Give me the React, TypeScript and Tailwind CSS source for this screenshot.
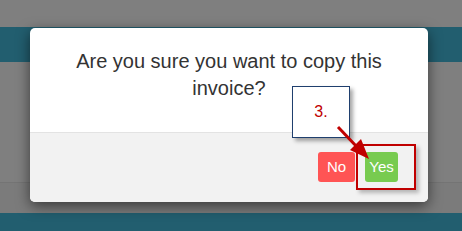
import React from "react";

function Backdrop() {
    return (
        <div className="flex flex-col w-[462px] h-[231px] bg-[#7f7f7f]">
            <div className="h-[27px] bg-[#7f7f7f]" />
            <div className="h-[35px] bg-[#225e6f]" />
            <div className="h-[121px] bg-[#7f7f7f] border-b border-[#747474]" />
            <div className="h-[30px] bg-[#7b7b7b]" />
            <div className="flex-1 bg-[#225e6f]" />
        </div>
    );
}

export default function App() {
    return (
        <div className="relative w-[462px] h-[231px] overflow-hidden font-['Liberation_Sans',Arial,sans-serif]">
            <Backdrop />

            {/* confirm dialog */}
            <div className="absolute left-[30px] top-[28px] w-[398px] h-[174px] flex flex-col rounded-[5px] overflow-hidden bg-white shadow-[0_4px_14px_rgba(0,0,0,0.55)]">
                <div className="h-[104px] pt-[20px] px-[40px] text-center text-[20px] leading-[27px] text-[#333]">
                    Are you sure you want to copy this invoice?
                </div>
                <div className="flex-1 flex justify-end items-start gap-[10px] pt-[19px] pr-[30px] bg-[#f2f2f2] border-t border-[#e3e3e3]">
                    <button className="w-[37px] h-[30px] rounded-[3px] bg-[#ff5454] text-white text-[15px]">No</button>
                    <button className="w-[33px] h-[30px] rounded-[3px] bg-[#78cb50] text-white text-[15px]">Yes</button>
                </div>
            </div>

            {/* annotation: highlight box */}
            <div className="absolute left-[356px] top-[144px] w-[60px] h-[46px] border-2 border-[#c00000] shadow-[3px_3px_4px_rgba(0,0,0,0.25)]" />

            {/* annotation: callout */}
            <div className="absolute left-[292px] top-[86px] w-[58px] h-[52px] flex items-center justify-center bg-white border border-[#1f3f6e] shadow-[3px_3px_4px_rgba(0,0,0,0.35)]">
                <span className="text-[16px] text-[#c00000]">3.</span>
            </div>

            {/* annotation: arrow */}
            <svg className="absolute left-0 top-0" width="462" height="231" viewBox="0 0 462 231">
                <line x1="338" y1="127" x2="358" y2="148" stroke="#c00000" strokeWidth="3" />
                <polygon points="369,159 350,150 361,139" fill="#c00000" />
            </svg>
        </div>
    );
}
